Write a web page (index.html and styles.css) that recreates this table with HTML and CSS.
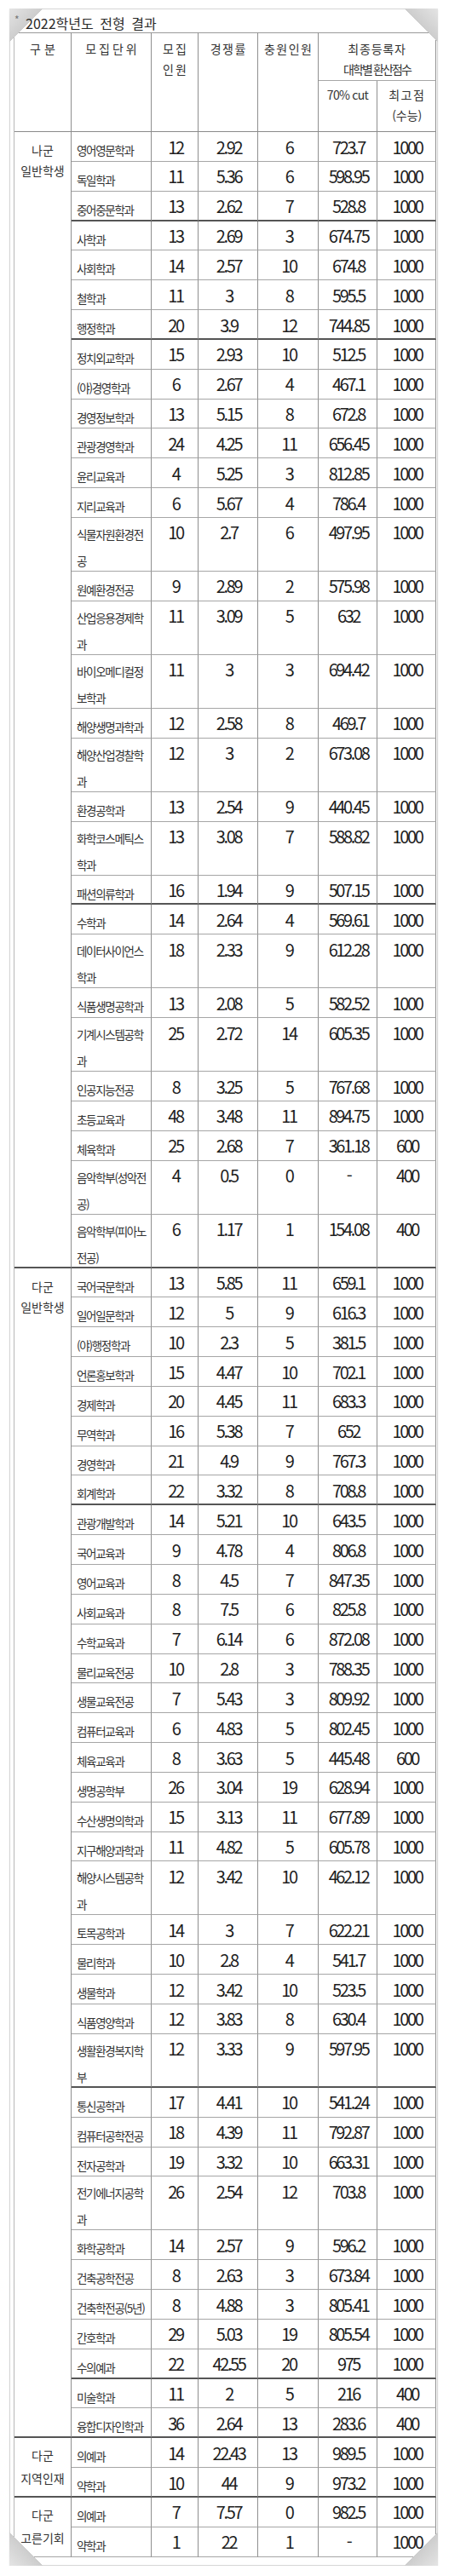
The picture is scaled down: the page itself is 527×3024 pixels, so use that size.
FILE: index.html
```html
<!DOCTYPE html>
<html lang="ko">
<head>
<meta charset="utf-8">
<title>2022학년도 전형 결과</title>
<link rel="stylesheet" href="styles.css">
</head>
<body>
<div class="sheet">
  <div class="corner tl"></div>
  <div class="corner tr"></div>
  <div class="corner bl"></div>
  <div class="corner br"></div>
  <div class="title"><span class="ast">*</span> 2022학년도 전형 결과</div>
  <div class="grid">
    <div class="hd span2 k1">구분</div>
    <div class="hd span2 k2">모집단위</div>
    <div class="hd span2 k3">모집<br>인원</div>
    <div class="hd span2">경쟁률</div>
    <div class="hd span2">충원인원</div>
    <div class="hd top"><span class="l1">최종등록자</span><br><span class="l2">대학별 환산점수</span></div>
    <div class="hd sub cut">70% cut</div>
    <div class="hd sub"><span class="l3">최고점</span><br><span class="l4">(수능)</span></div>

    <div class="g big sep" style="grid-row: span 31">나군<br>일반학생</div>
    <div class="row s"><div class="n">영어영문학과</div><div class="v">12</div><div class="v">2.92</div><div class="v">6</div><div class="v">723.7</div><div class="v">1000</div></div>
    <div class="row s"><div class="n">독일학과</div><div class="v">11</div><div class="v">5.36</div><div class="v">6</div><div class="v">598.95</div><div class="v">1000</div></div>
    <div class="row s sep"><div class="n">중어중문학과</div><div class="v">13</div><div class="v">2.62</div><div class="v">7</div><div class="v">528.8</div><div class="v">1000</div></div>
    <div class="row s"><div class="n">사학과</div><div class="v">13</div><div class="v">2.69</div><div class="v">3</div><div class="v">674.75</div><div class="v">1000</div></div>
    <div class="row s"><div class="n">사회학과</div><div class="v">14</div><div class="v">2.57</div><div class="v">10</div><div class="v">674.8</div><div class="v">1000</div></div>
    <div class="row s"><div class="n">철학과</div><div class="v">11</div><div class="v">3</div><div class="v">8</div><div class="v">595.5</div><div class="v">1000</div></div>
    <div class="row s sep"><div class="n">행정학과</div><div class="v">20</div><div class="v">3.9</div><div class="v">12</div><div class="v">744.85</div><div class="v">1000</div></div>
    <div class="row s"><div class="n">정치외교학과</div><div class="v">15</div><div class="v">2.93</div><div class="v">10</div><div class="v">512.5</div><div class="v">1000</div></div>
    <div class="row s"><div class="n">(야)경영학과</div><div class="v">6</div><div class="v">2.67</div><div class="v">4</div><div class="v">467.1</div><div class="v">1000</div></div>
    <div class="row s"><div class="n">경영정보학과</div><div class="v">13</div><div class="v">5.15</div><div class="v">8</div><div class="v">672.8</div><div class="v">1000</div></div>
    <div class="row s"><div class="n">관광경영학과</div><div class="v">24</div><div class="v">4.25</div><div class="v">11</div><div class="v">656.45</div><div class="v">1000</div></div>
    <div class="row s"><div class="n">윤리교육과</div><div class="v">4</div><div class="v">5.25</div><div class="v">3</div><div class="v">812.85</div><div class="v">1000</div></div>
    <div class="row s"><div class="n">지리교육과</div><div class="v">6</div><div class="v">5.67</div><div class="v">4</div><div class="v">786.4</div><div class="v">1000</div></div>
    <div class="row d"><div class="n">식물자원환경전<br>공</div><div class="v">10</div><div class="v">2.7</div><div class="v">6</div><div class="v">497.95</div><div class="v">1000</div></div>
    <div class="row s"><div class="n">원예환경전공</div><div class="v">9</div><div class="v">2.89</div><div class="v">2</div><div class="v">575.98</div><div class="v">1000</div></div>
    <div class="row d"><div class="n">산업응용경제학<br>과</div><div class="v">11</div><div class="v">3.09</div><div class="v">5</div><div class="v">632</div><div class="v">1000</div></div>
    <div class="row d"><div class="n">바이오메디컬정<br>보학과</div><div class="v">11</div><div class="v">3</div><div class="v">3</div><div class="v">694.42</div><div class="v">1000</div></div>
    <div class="row s"><div class="n">해양생명과학과</div><div class="v">12</div><div class="v">2.58</div><div class="v">8</div><div class="v">469.7</div><div class="v">1000</div></div>
    <div class="row d"><div class="n">해양산업경찰학<br>과</div><div class="v">12</div><div class="v">3</div><div class="v">2</div><div class="v">673.08</div><div class="v">1000</div></div>
    <div class="row s"><div class="n">환경공학과</div><div class="v">13</div><div class="v">2.54</div><div class="v">9</div><div class="v">440.45</div><div class="v">1000</div></div>
    <div class="row d"><div class="n">화학코스메틱스<br>학과</div><div class="v">13</div><div class="v">3.08</div><div class="v">7</div><div class="v">588.82</div><div class="v">1000</div></div>
    <div class="row s sep"><div class="n">패션의류학과</div><div class="v">16</div><div class="v">1.94</div><div class="v">9</div><div class="v">507.15</div><div class="v">1000</div></div>
    <div class="row s"><div class="n">수학과</div><div class="v">14</div><div class="v">2.64</div><div class="v">4</div><div class="v">569.61</div><div class="v">1000</div></div>
    <div class="row d"><div class="n">데이터사이언스<br>학과</div><div class="v">18</div><div class="v">2.33</div><div class="v">9</div><div class="v">612.28</div><div class="v">1000</div></div>
    <div class="row s"><div class="n">식품생명공학과</div><div class="v">13</div><div class="v">2.08</div><div class="v">5</div><div class="v">582.52</div><div class="v">1000</div></div>
    <div class="row d"><div class="n">기계시스템공학<br>과</div><div class="v">25</div><div class="v">2.72</div><div class="v">14</div><div class="v">605.35</div><div class="v">1000</div></div>
    <div class="row s"><div class="n">인공지능전공</div><div class="v">8</div><div class="v">3.25</div><div class="v">5</div><div class="v">767.68</div><div class="v">1000</div></div>
    <div class="row s"><div class="n">초등교육과</div><div class="v">48</div><div class="v">3.48</div><div class="v">11</div><div class="v">894.75</div><div class="v">1000</div></div>
    <div class="row s"><div class="n">체육학과</div><div class="v">25</div><div class="v">2.68</div><div class="v">7</div><div class="v">361.18</div><div class="v">600</div></div>
    <div class="row d"><div class="n">음악학부(성악전<br>공)</div><div class="v">4</div><div class="v">0.5</div><div class="v">0</div><div class="v">-</div><div class="v">400</div></div>
    <div class="row d sep"><div class="n">음악학부(피아노<br>전공)</div><div class="v">6</div><div class="v">1.17</div><div class="v">1</div><div class="v">154.08</div><div class="v">400</div></div>

    <div class="g big sep" style="grid-row: span 37">다군<br>일반학생</div>
    <div class="row s"><div class="n">국어국문학과</div><div class="v">13</div><div class="v">5.85</div><div class="v">11</div><div class="v">659.1</div><div class="v">1000</div></div>
    <div class="row s"><div class="n">일어일문학과</div><div class="v">12</div><div class="v">5</div><div class="v">9</div><div class="v">616.3</div><div class="v">1000</div></div>
    <div class="row s"><div class="n">(야)행정학과</div><div class="v">10</div><div class="v">2.3</div><div class="v">5</div><div class="v">381.5</div><div class="v">1000</div></div>
    <div class="row s"><div class="n">언론홍보학과</div><div class="v">15</div><div class="v">4.47</div><div class="v">10</div><div class="v">702.1</div><div class="v">1000</div></div>
    <div class="row s"><div class="n">경제학과</div><div class="v">20</div><div class="v">4.45</div><div class="v">11</div><div class="v">683.3</div><div class="v">1000</div></div>
    <div class="row s"><div class="n">무역학과</div><div class="v">16</div><div class="v">5.38</div><div class="v">7</div><div class="v">652</div><div class="v">1000</div></div>
    <div class="row s"><div class="n">경영학과</div><div class="v">21</div><div class="v">4.9</div><div class="v">9</div><div class="v">767.3</div><div class="v">1000</div></div>
    <div class="row s sep"><div class="n">회계학과</div><div class="v">22</div><div class="v">3.32</div><div class="v">8</div><div class="v">708.8</div><div class="v">1000</div></div>
    <div class="row s"><div class="n">관광개발학과</div><div class="v">14</div><div class="v">5.21</div><div class="v">10</div><div class="v">643.5</div><div class="v">1000</div></div>
    <div class="row s"><div class="n">국어교육과</div><div class="v">9</div><div class="v">4.78</div><div class="v">4</div><div class="v">806.8</div><div class="v">1000</div></div>
    <div class="row s"><div class="n">영어교육과</div><div class="v">8</div><div class="v">4.5</div><div class="v">7</div><div class="v">847.35</div><div class="v">1000</div></div>
    <div class="row s"><div class="n">사회교육과</div><div class="v">8</div><div class="v">7.5</div><div class="v">6</div><div class="v">825.8</div><div class="v">1000</div></div>
    <div class="row s"><div class="n">수학교육과</div><div class="v">7</div><div class="v">6.14</div><div class="v">6</div><div class="v">872.08</div><div class="v">1000</div></div>
    <div class="row s"><div class="n">물리교육전공</div><div class="v">10</div><div class="v">2.8</div><div class="v">3</div><div class="v">788.35</div><div class="v">1000</div></div>
    <div class="row s"><div class="n">생물교육전공</div><div class="v">7</div><div class="v">5.43</div><div class="v">3</div><div class="v">809.92</div><div class="v">1000</div></div>
    <div class="row s"><div class="n">컴퓨터교육과</div><div class="v">6</div><div class="v">4.83</div><div class="v">5</div><div class="v">802.45</div><div class="v">1000</div></div>
    <div class="row s"><div class="n">체육교육과</div><div class="v">8</div><div class="v">3.63</div><div class="v">5</div><div class="v">445.48</div><div class="v">600</div></div>
    <div class="row s"><div class="n">생명공학부</div><div class="v">26</div><div class="v">3.04</div><div class="v">19</div><div class="v">628.94</div><div class="v">1000</div></div>
    <div class="row s"><div class="n">수산생명의학과</div><div class="v">15</div><div class="v">3.13</div><div class="v">11</div><div class="v">677.89</div><div class="v">1000</div></div>
    <div class="row s"><div class="n">지구해양과학과</div><div class="v">11</div><div class="v">4.82</div><div class="v">5</div><div class="v">605.78</div><div class="v">1000</div></div>
    <div class="row d"><div class="n">해양시스템공학<br>과</div><div class="v">12</div><div class="v">3.42</div><div class="v">10</div><div class="v">462.12</div><div class="v">1000</div></div>
    <div class="row s"><div class="n">토목공학과</div><div class="v">14</div><div class="v">3</div><div class="v">7</div><div class="v">622.21</div><div class="v">1000</div></div>
    <div class="row s"><div class="n">물리학과</div><div class="v">10</div><div class="v">2.8</div><div class="v">4</div><div class="v">541.7</div><div class="v">1000</div></div>
    <div class="row s"><div class="n">생물학과</div><div class="v">12</div><div class="v">3.42</div><div class="v">10</div><div class="v">523.5</div><div class="v">1000</div></div>
    <div class="row s"><div class="n">식품영양학과</div><div class="v">12</div><div class="v">3.83</div><div class="v">8</div><div class="v">630.4</div><div class="v">1000</div></div>
    <div class="row d sep"><div class="n">생활환경복지학<br>부</div><div class="v">12</div><div class="v">3.33</div><div class="v">9</div><div class="v">597.95</div><div class="v">1000</div></div>
    <div class="row s"><div class="n">통신공학과</div><div class="v">17</div><div class="v">4.41</div><div class="v">10</div><div class="v">541.24</div><div class="v">1000</div></div>
    <div class="row s"><div class="n">컴퓨터공학전공</div><div class="v">18</div><div class="v">4.39</div><div class="v">11</div><div class="v">792.87</div><div class="v">1000</div></div>
    <div class="row s"><div class="n">전자공학과</div><div class="v">19</div><div class="v">3.32</div><div class="v">10</div><div class="v">663.31</div><div class="v">1000</div></div>
    <div class="row d"><div class="n">전기에너지공학<br>과</div><div class="v">26</div><div class="v">2.54</div><div class="v">12</div><div class="v">703.8</div><div class="v">1000</div></div>
    <div class="row s"><div class="n">화학공학과</div><div class="v">14</div><div class="v">2.57</div><div class="v">9</div><div class="v">596.2</div><div class="v">1000</div></div>
    <div class="row s"><div class="n">건축공학전공</div><div class="v">8</div><div class="v">2.63</div><div class="v">3</div><div class="v">673.84</div><div class="v">1000</div></div>
    <div class="row s"><div class="n">건축학전공(5년)</div><div class="v">8</div><div class="v">4.88</div><div class="v">3</div><div class="v">805.41</div><div class="v">1000</div></div>
    <div class="row s"><div class="n">간호학과</div><div class="v">29</div><div class="v">5.03</div><div class="v">19</div><div class="v">805.54</div><div class="v">1000</div></div>
    <div class="row s sep"><div class="n">수의예과</div><div class="v">22</div><div class="v">42.55</div><div class="v">20</div><div class="v">975</div><div class="v">1000</div></div>
    <div class="row s"><div class="n">미술학과</div><div class="v">11</div><div class="v">2</div><div class="v">5</div><div class="v">216</div><div class="v">400</div></div>
    <div class="row s sep"><div class="n">융합디자인학과</div><div class="v">36</div><div class="v">2.64</div><div class="v">13</div><div class="v">283.6</div><div class="v">400</div></div>

    <div class="g small sep" style="grid-row: span 2">다군<br>지역인재</div>
    <div class="row s"><div class="n">의예과</div><div class="v">14</div><div class="v">22.43</div><div class="v">13</div><div class="v">989.5</div><div class="v">1000</div></div>
    <div class="row s sep"><div class="n">약학과</div><div class="v">10</div><div class="v">44</div><div class="v">9</div><div class="v">973.2</div><div class="v">1000</div></div>

    <div class="g small" style="grid-row: span 2">다군<br>고른기회</div>
    <div class="row s"><div class="n">의예과</div><div class="v">7</div><div class="v">7.57</div><div class="v">0</div><div class="v">982.5</div><div class="v">1000</div></div>
    <div class="row s"><div class="n">약학과</div><div class="v">1</div><div class="v">22</div><div class="v">1</div><div class="v">-</div><div class="v">1000</div></div>
  </div>
</div>
</body>
</html>
```

FILE: styles.css
```css
html, body {
  margin: 0;
  padding: 0;
  background: #ffffff;
}

body {
  font-family: "Noto Sans CJK KR", "Noto Sans", sans-serif;
  color: #222222;
}

.sheet {
  position: relative;
  box-sizing: border-box;
  width: 503px;
  margin: 10px 0 0 11px;
  padding: 0 1px 9px 4px;
  border: 1px solid #d6d6d6;
  box-shadow: 0 1px 2px rgba(0, 0, 0, 0.08);
}

.corner {
  position: absolute;
  width: 40px;
  height: 40px;
  z-index: 2;
}

.corner.tl {
  top: -1px;
  left: -1px;
  background: linear-gradient(135deg, #e4e4e4 0%, #cdcdcd 49%, transparent 50%);
}

.corner.tr {
  top: -1px;
  right: -1px;
  background: linear-gradient(225deg, #e4e4e4 0%, #cdcdcd 49%, transparent 50%);
}

.corner.bl {
  bottom: -1px;
  left: -1px;
  background: linear-gradient(45deg, #e4e4e4 0%, #cdcdcd 49%, transparent 50%);
}

.corner.br {
  bottom: -1px;
  right: -1px;
  background: linear-gradient(315deg, #e4e4e4 0%, #cdcdcd 49%, transparent 50%);
}

.title {
  position: relative;
  z-index: 3;
  height: 27px;
  box-sizing: border-box;
  padding: 5px 0 0 1px;
  font-size: 16px;
  line-height: 22px;
  color: #2a2a2a;
  word-spacing: 3px;
  white-space: nowrap;
}

.title .ast {
  font-size: 12px;
  color: #777777;
  vertical-align: top;
  line-height: 14px;
}

.grid {
  display: grid;
  grid-template-columns: 67px 94px 55px 70px 71px 69px 69px;
  width: 496px;
  box-sizing: border-box;
  border-left: 1px solid #b8b8b8;
}

.grid > div,
.row > div {
  box-sizing: border-box;
  border-right: 1px solid #8f8f8f;
  border-bottom: 1px solid #a6a6a6;
  min-width: 0;
}

.row {
  display: contents;
}

.hd {
  font-size: 14px;
  line-height: 24px;
  color: #333333;
  text-align: center;
  padding-top: 6px;
  padding-left: 1.5px;
  letter-spacing: 1.5px;
  border-top: 1px solid #9a9a9a;
  white-space: nowrap;
}

.hd.span2 {
  grid-row: span 2;
  border-bottom-color: #8a8a8a;
}

.hd.k1 {
  letter-spacing: 4px;
  padding-left: 4px;
}

.hd.k2 {
  letter-spacing: 3px;
  padding-left: 3px;
}

.hd.k3 {
  letter-spacing: 2px;
  padding-left: 2px;
}

.hd.top {
  grid-column: span 2;
  height: 57px;
  padding-left: 0;
}

.hd .l1 {
  letter-spacing: 0.8px;
}

.hd .l2 {
  letter-spacing: -1.9px;
}

.hd .l3 {
  letter-spacing: 1.5px;
}

.hd .l4 {
  letter-spacing: 0;
}

.hd.sub {
  height: 60px;
  padding-top: 4px;
  border-top: 0;
  border-bottom-color: #8a8a8a;
}

.hd.cut {
  letter-spacing: -0.7px;
  padding-left: 0;
}

.row.s > div {
  height: 34.85px;
}

.row.d > div {
  height: 63px;
}

.v {
  font-size: 20px;
  line-height: 24px;
  letter-spacing: -2.4px;
  text-align: center;
  padding: 5.5px 0 0 2px;
  color: #1e1e1e;
  white-space: nowrap;
}

.n {
  font-size: 13.5px;
  line-height: 26px;
  letter-spacing: -1.3px;
  white-space: nowrap;
  padding: 8px 0 0 6px;
  color: #333333;
}

.row.d > .n {
  line-height: 31px;
  padding-top: 4px;
}

.g {
  font-size: 14px;
  letter-spacing: 0;
  color: #333333;
  text-align: center;
}

.g.big {
  line-height: 24px;
  padding-top: 9px;
}

.g.small {
  display: flex;
  flex-direction: column;
  justify-content: center;
  align-items: center;
  line-height: 27px;
}

.row.sep > div,
.g.sep {
  border-bottom: 2px solid #555555;
}
```
